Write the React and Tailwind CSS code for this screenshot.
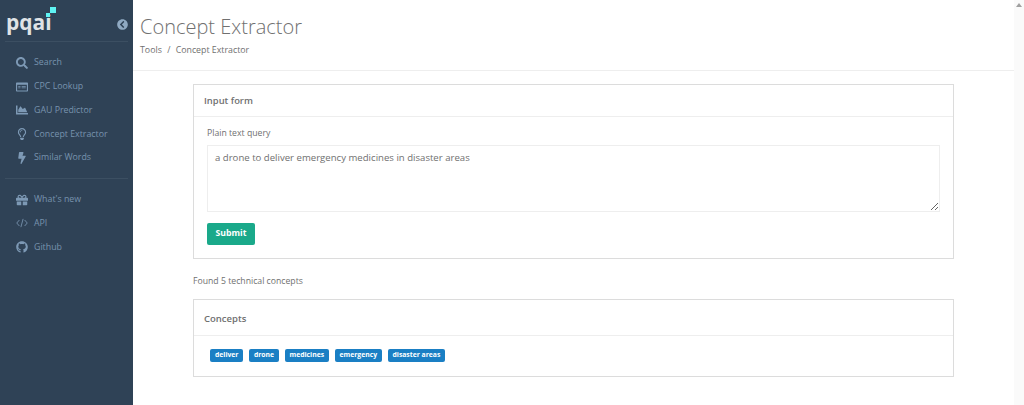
import {
  FaSearch,
  FaChartArea,
  FaRegLightbulb,
  FaBolt,
  FaGift,
  FaGithub,
  FaChevronCircleLeft,
} from "react-icons/fa";

const CpcIcon = (props) => (
  <svg viewBox="0 0 16 14" fill="currentColor" {...props}>
    <path fillRule="evenodd" d="M1 1h14a1 1 0 0 1 1 1v10a1 1 0 0 1-1 1H1a1 1 0 0 1-1-1V2a1 1 0 0 1 1-1zm.5 3v7.500h13V4zM3 5.500h3v1H3zm0 2.200h3v1H3zm4.500-2.200H13v1H7.500zm0 2.200H13v1H7.500z" />
  </svg>
);

const CodeIcon = (props) => (
  <svg viewBox="0 0 16 14" fill="none" stroke="currentColor" strokeWidth="1.1" {...props}>
    <path d="M4.500 3 1 7l3.500 4M11.500 3 15 7l-3.500 4M9.500 1.500 6.500 12.500" />
  </svg>
);

const tools = [
  { label: "Search", icon: FaSearch },
  { label: "CPC Lookup", icon: CpcIcon },
  { label: "GAU Predictor", icon: FaChartArea },
  { label: "Concept Extractor", icon: FaRegLightbulb },
  { label: "Similar Words", icon: FaBolt },
];

const links = [
  { label: "What's new", icon: FaGift },
  { label: "API", icon: CodeIcon },
  { label: "Github", icon: FaGithub },
];

const concepts = ["deliver", "drone", "medicines", "emergency", "disaster areas"];

const NavItem = ({ label, icon: Icon }) => (
  <a href="#" className="flex items-center h-[23.75px] pl-4 text-[#7d99b5]">
    <span className="w-[18px] flex justify-start">
      <Icon className="w-[12px] h-[12px]" />
    </span>
    <span className="text-[8.8px] text-[#7893ae]">{label}</span>
  </a>
);

const App = () => {
  return (
    <div className="flex h-[405px] w-[1024px] overflow-hidden bg-white font-['Open_Sans',sans-serif]">
      {/* Sidebar */}
      <aside className="w-[133px] shrink-0 bg-[#2f4256]">
        <div className="relative h-[42px] mx-[5px] border-b border-[#3c4f62]">
          <span className="absolute left-[1px] top-[7px] text-[21px] leading-[30px] font-bold text-[#dfe3e6]">
            pqai
          </span>
          <span className="absolute left-[45px] top-[7px] w-[6px] h-[6px] bg-[#5ff3f3]"></span>
          <span className="absolute left-[41px] top-[13px] w-[4px] h-[4px] bg-[#5ff3f3]"></span>
          <FaChevronCircleLeft className="absolute left-[112px] top-[19px] w-[11px] h-[11px] text-[#8fa9c2]" />
        </div>

        <nav className="pt-[9px] pb-[8px]">
          {tools.map((item) => (
            <NavItem key={item.label} {...item} />
          ))}
        </nav>

        <div className="mx-[5px] border-t border-[#3c4f62]"></div>

        <nav className="pt-[9px]">
          {links.map((item) => (
            <NavItem key={item.label} {...item} />
          ))}
        </nav>
      </aside>

      {/* Main */}
      <main className="flex-1 min-w-0 text-[#707070]">
        <header className="h-[71px] pl-[7px] border-b border-[#eeeeee]">
          <h1 className="pt-[12px] text-[20px] leading-[29px] font-light">Concept Extractor</h1>
          <div className="pt-[2px] text-[8.8px] leading-[14px]">
            Tools <span className="mx-[3px]">/</span> Concept Extractor
          </div>
        </header>

        <div className="pl-[60px] w-[821px] pt-[13px]">
          <section className="border border-[#dcdcdc]">
            <h2 className="h-[32px] pl-[10px] pt-[2px] flex items-center border-b border-[#eeeeee] text-[9.4px] font-semibold">
              Input form
            </h2>
            <div className="px-[13px] pt-[9px] pb-[13px]">
              <label className="block text-[8.7px] leading-[14px] mb-[5px]">Plain text query</label>
              <textarea
                className="block w-full h-[67px] px-[7px] py-[5px] border border-[#eeeeee] text-[9.6px] leading-[14px] text-[#707070] outline-none"
                defaultValue="a drone to deliver emergency medicines in disaster areas"
              />
              <button className="block mt-[11px] w-[48px] h-[22px] rounded-[2px] bg-[#1aa98a] text-white text-[8.7px] font-bold">
                Submit
              </button>
            </div>
          </section>

          <p className="mt-[15px] text-[8.7px] leading-[14px]">Found 5 technical concepts</p>

          <section className="mt-[11px] h-[78px] border border-[#dcdcdc]">
            <h2 className="h-[36px] pl-[10px] pt-[3px] flex items-center border-b border-[#eeeeee] text-[9.5px] font-semibold">
              Concepts
            </h2>
            <div className="flex gap-[5.5px] pl-[16px] pt-[13px]">
              {concepts.map((concept) => (
                <span
                  key={concept}
                  className="h-[13px] px-[5px] flex items-center rounded-[2px] bg-[#1a7fc4] text-white text-[6.8px] font-bold"
                >
                  {concept}
                </span>
              ))}
            </div>
          </section>
        </div>
      </main>

      {/* Scrollbar */}
      <div className="w-[10px] shrink-0 bg-[#fafafa] pt-[3px] flex justify-center">
        <div className="w-0 h-0 border-x-[3px] border-x-transparent border-b-[4px] border-b-[#a0a0a0]"></div>
      </div>
    </div>
  );
};

export default App;
